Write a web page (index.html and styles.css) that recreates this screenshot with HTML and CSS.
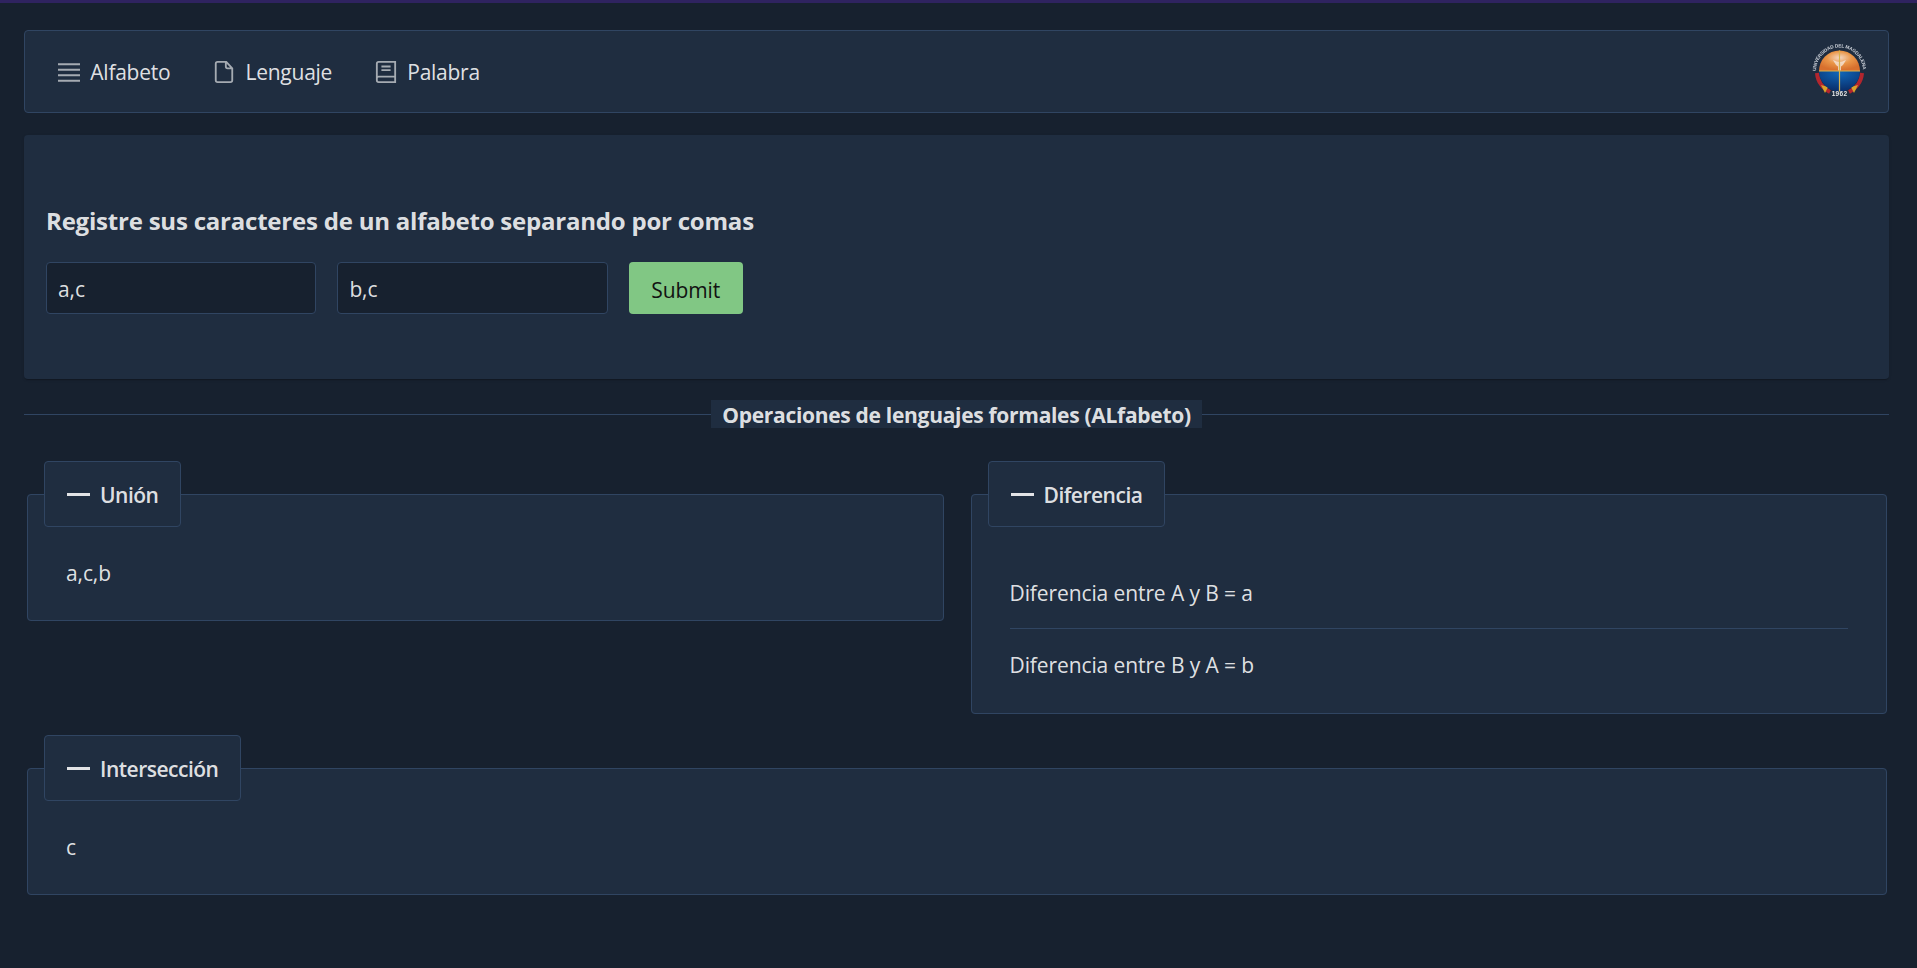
FILE: index.html
```html
<!DOCTYPE html>
<html lang="es">
<head>
  <meta charset="UTF-8">
  <meta name="viewport" content="width=device-width, initial-scale=1.0">
  <title>Operaciones de lenguajes formales</title>
  <link rel="stylesheet" href="styles.css">
</head>
<body>
  <nav class="navbar">
    <ul class="menu">
      <li class="menu-item">
        <svg class="menu-icon" viewBox="0 0 24 24"><path d="M0 3.500h24M0 9.500h24M0 15.500h24M0 21.500h24"/></svg>
        <span>Alfabeto</span>
      </li>
      <li class="menu-item">
        <svg class="menu-icon" viewBox="0 0 24 24"><path d="M5 1h9.500L21 8v13a2 2 0 0 1-2 2H5a2 2 0 0 1-2-2V3a2 2 0 0 1 2-2zM14 1v5a2 2 0 0 0 2 2h5"/></svg>
        <span>Lenguaje</span>
      </li>
      <li class="menu-item">
        <svg class="menu-icon" viewBox="0 0 24 24"><path d="M2 19V3a2 2 0 0 1 2-2h18v22H4a2 2 0 0 1-2-2v-2a2 2 0 0 1 2-2h18M7 6h10M7 10h10"/></svg>
        <span>Palabra</span>
      </li>
    </ul>
    <svg class="logo" viewBox="0 0 56 56">
      <defs>
        <radialGradient id="sky" cx="0.5" cy="0.35" r="0.6">
          <stop offset="0" stop-color="#f3d8c6"/>
          <stop offset="0.5" stop-color="#ea9648"/>
          <stop offset="1" stop-color="#d8702e"/>
        </radialGradient>
        <radialGradient id="sea" cx="0.5" cy="0.1" r="0.8">
          <stop offset="0" stop-color="#1066b8"/>
          <stop offset="1" stop-color="#0a3270"/>
        </radialGradient>
        <path id="ring" d="M4 27a23.500 23.500 0 0 1 47 0"/>
      </defs>
      <path d="M5 29A23 23 0 0 0 18 48M50 29A23 23 0 0 1 37 48" class="logo-band"/>
      <path d="M9 41l7 2-3 6zM46 41l-7 2 3 6z" fill="#d9a32a"/>
      <path d="M7 27a20.500 20.500 0 0 1 41 0z" fill="url(#sky)"/>
      <path d="M7 27a20.500 20.500 0 0 0 41 0z" fill="url(#sea)"/>
      <path d="M21 16c3 1 4.500 2 6.500 2s3.500-1 6.500-2c-2 4-3.500 5.500-5 6.500v4h-3v-4c-1.500-1-3-2.500-5-6.500z" fill="#f6ebe4" opacity="0.75"/>
      <path d="M7 27h41M27.500 6.500v41" class="logo-cross"/>
      <text class="logo-ring"><textPath href="#ring" textLength="72" lengthAdjust="spacing">UNIVERSIDAD DEL MAGDALENA</textPath></text>
      <text class="logo-year" x="27.500" y="52" text-anchor="middle">1962</text>
    </svg>
  </nav>

  <section class="card">
    <h2 class="card-title">Registre sus caracteres de un alfabeto separando por comas</h2>
    <form class="alphabet-form">
      <input class="text-input" type="text" value="a,c">
      <input class="text-input" type="text" value="b,c">
      <button class="submit-btn" type="button">Submit</button>
    </form>
  </section>

  <div class="divider">
    <span class="divider-line"></span>
    <b class="divider-label">Operaciones de lenguajes formales (ALfabeto)</b>
    <span class="divider-line"></span>
  </div>

  <div class="results">
    <fieldset class="panel">
      <legend class="panel-legend"><span class="minus"></span><span>Unión</span></legend>
      <div class="panel-content">a,c,b</div>
    </fieldset>

    <fieldset class="panel">
      <legend class="panel-legend"><span class="minus"></span><span>Diferencia</span></legend>
      <div class="panel-content">
        <p class="diff-row">Diferencia entre A y B = a</p>
        <p class="diff-row diff-row-last">Diferencia entre B y A = b</p>
      </div>
    </fieldset>

    <fieldset class="panel panel-wide">
      <legend class="panel-legend"><span class="minus"></span><span>Intersección</span></legend>
      <div class="panel-content">c</div>
    </fieldset>
  </div>
</body>
</html>
```

FILE: styles.css
```css
* {
  box-sizing: border-box;
}
body {
  margin: 0;
  min-height: 968px;
  padding: 27px 28px 0 24px;
  border-top: 3px solid #2f2360;
  background: #17212f;
  color: rgba(255,255,255,0.87);
  font-family: "Open Sans", "Noto Sans", sans-serif;
  font-size: 21px;
  line-height: 28px;
  letter-spacing: -0.1px;
}
.navbar {
  display: flex;
  justify-content: space-between;
  align-items: center;
  height: 83px;
  padding: 0 20px 0 11.500px;
  background: #1f2d40;
  border: 1px solid #304562;
  border-radius: 4px;
  letter-spacing: -0.25px;
}
.menu {
  display: flex;
  margin: 0;
  padding: 0;
  list-style: none;
}
.menu-item {
  display: flex;
  align-items: center;
  gap: 10.5px;
  padding: 0 21.3px;
}
.menu-icon {
  width: 22px;
  height: 22px;
  fill: none;
  stroke: rgba(255,255,255,0.6);
  stroke-width: 2;
}
.logo {
  width: 56px;
  height: 56px;
  margin-top: 1px;
  filter: blur(0.4px);
}
.logo-band {
  fill: none;
  stroke: #b3262e;
  stroke-width: 4;
}
.logo-cross {
  fill: none;
  stroke: #d8b24a;
  stroke-width: 1.2;
}
.logo-ring {
  font-family: "Liberation Sans", sans-serif;
  font-size: 4.8px;
  font-weight: bold;
  letter-spacing: 0;
  fill: #c9ced6;
}
.logo-year {
  font-family: "Liberation Sans", sans-serif;
  font-size: 6.5px;
  font-weight: bold;
  letter-spacing: 0.3px;
  fill: #e8e8e8;
}
.card {
  margin-top: 22px;
  padding: 70px 22px 65px;
  background: #1f2d40;
  border-radius: 4px;
  box-shadow: 0 2px 1px -1px rgba(0,0,0,0.2), 0 1px 3px rgba(0,0,0,0.12);
}
.card-title {
  margin: 0 0 25px;
  font-size: 24px;
  line-height: 32px;
  font-weight: 700;
  letter-spacing: -0.215px;
}
.alphabet-form {
  display: flex;
  gap: 21.2px;
}
.text-input {
  width: 270.2px;
  height: 52px;
  padding: 2px 11px 0;
  background: #17212f;
  border: 1px solid #304562;
  border-radius: 4px;
  color: rgba(255,255,255,0.87);
  font: inherit;
  letter-spacing: inherit;
}
.submit-btn {
  width: 114px;
  height: 52px;
  padding: 3px 0 0;
  background: #81c784;
  border: none;
  border-radius: 4px;
  color: #121212;
  font: inherit;
  letter-spacing: inherit;
}
.divider {
  display: flex;
  align-items: center;
  height: 28px;
  margin-top: 21px;
}
.divider-line {
  flex: 1;
  height: 1px;
  background: #304562;
}
.divider-label {
  height: 28px;
  padding: 1px 11px 0;
  background: #1f2d40;
  font-weight: 700;
  letter-spacing: -0.3px;
}
.results {
  display: grid;
  grid-template-columns: 1fr 1fr;
  column-gap: 27px;
  row-gap: 21px;
  align-items: start;
  margin: 33px 2px 0 3px;
}
.panel {
  min-width: 0;
  margin: 0;
  padding: 0 16px;
  background: #1f2d40;
  border: 1px solid #304562;
  border-radius: 4px;
}
.panel-wide {
  grid-column: 1 / 3;
}
.panel-legend {
  display: flex;
  align-items: center;
  gap: 10px;
  height: 66px;
  margin-bottom: -1px;
  padding: 1px 22px 0;
  background: #1f2d40;
  border: 1px solid #304562;
  border-radius: 4px;
  font-weight: 600;
  letter-spacing: -0.5px;
}
.minus {
  width: 23px;
  height: 3px;
  background: rgba(255,255,255,0.87);
}
.panel-content {
  padding: 33px 22px;
}
.diff-row {
  margin: 0;
  padding: 20px 0 21px;
  border-bottom: 1px solid #304562;
}
.diff-row-last {
  padding: 22px 0 1px;
  border-bottom: none;
}
```
